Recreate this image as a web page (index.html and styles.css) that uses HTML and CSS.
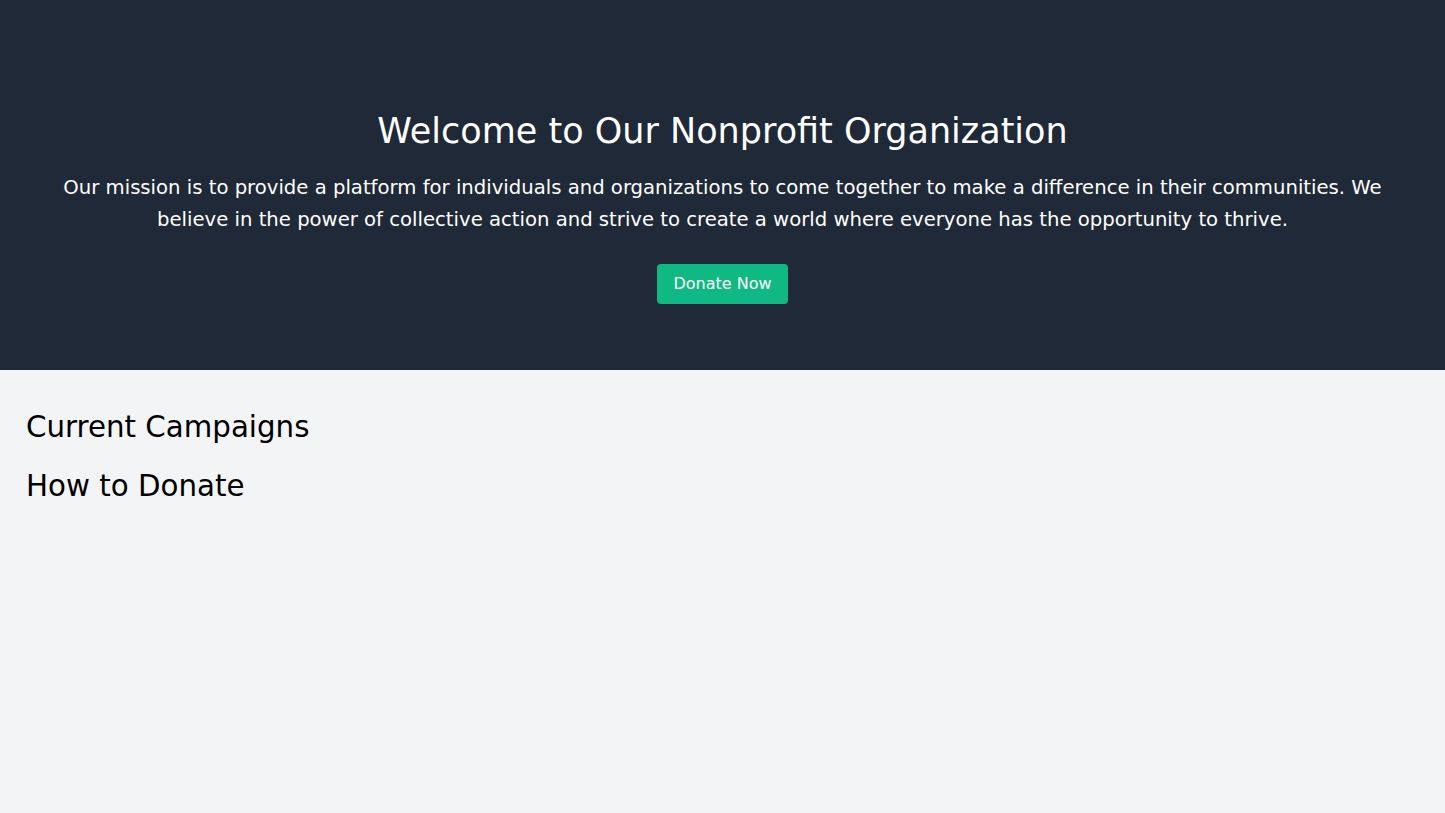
FILE: index.html
```html
<!DOCTYPE html>
<html lang="en">
<head>
  <meta charset="UTF-8">
  <meta name="viewport" content="width=device-width, initial-scale=1.0">
  <title>Nonprofit Organization</title>
  <link rel="stylesheet" href="styles.css">
</head>
<body>
  <!-- Hero -->
  <header class="hero">
    <h1>Welcome to Our Nonprofit Organization</h1>
    <p>Our mission is to provide a platform for individuals and organizations to come together to make a difference in their communities. We believe in the power of collective action and strive to create a world where everyone has the opportunity to thrive.</p>
    <a href="#donate" class="donate-btn">Donate Now</a>
  </header>

  <main class="content">
    <section class="campaigns">
      <h2>Current Campaigns</h2>
    </section>
    <section class="donate" id="donate">
      <h2>How to Donate</h2>
    </section>
  </main>
</body>
</html>
```

FILE: styles.css
```css
html, body {
  height: 100%;
}
body {
  margin: 0;
  font-family: "DejaVu Sans", sans-serif;
  background-color: #f3f4f6;
  color: #000;
}
.hero {
  background-color: #1f2937;
  color: white;
  text-align: center;
  padding: 111px 32px 66px;
}
.hero h1 {
  font-size: 35px;
  line-height: 40px;
  font-weight: normal;
  margin: 0 0 21px;
}
.hero p {
  font-size: 19.65px;
  line-height: 32px;
  margin: 0 0 28px;
}
.donate-btn {
  display: inline-block;
  background-color: #10b981;
  color: white;
  text-decoration: none;
  font-size: 16px;
  line-height: 24px;
  padding: 8px 16px;
  border-radius: 4px;
}
.content {
  padding: 39px 26px;
}
.content h2 {
  font-size: 29.3px;
  line-height: 36px;
  font-weight: normal;
  margin: 0 0 23px;
}
```
